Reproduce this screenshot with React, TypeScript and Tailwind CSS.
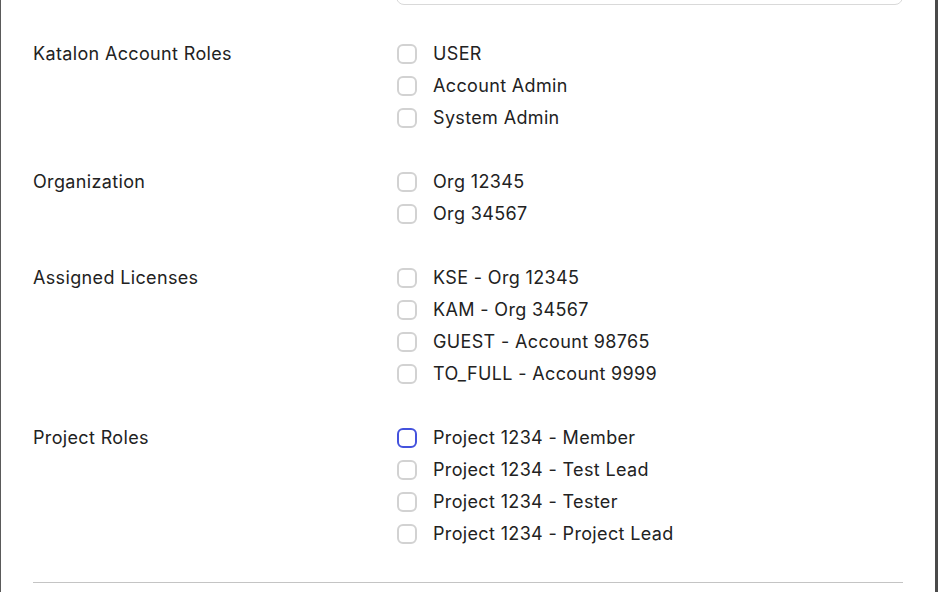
import React from 'react';

interface Group {
  label: string;
  options: string[];
}

const groups: Group[] = [
  { label: 'Katalon Account Roles', options: ['USER', 'Account Admin', 'System Admin'] },
  { label: 'Organization', options: ['Org 12345', 'Org 34567'] },
  {
    label: 'Assigned Licenses',
    options: ['KSE - Org 12345', 'KAM - Org 34567', 'GUEST - Account 98765', 'TO_FULL - Account 9999'],
  },
  {
    label: 'Project Roles',
    options: [
      'Project 1234 - Member',
      'Project 1234 - Test Lead',
      'Project 1234 - Tester',
      'Project 1234 - Project Lead',
    ],
  },
];

const Checkbox: React.FC<{ focused?: boolean }> = ({ focused }) => (
  <span
    className={
      focused
        ? 'ml-[1px] h-[20px] w-[20px] shrink-0 rounded-[6px] border-2 border-[#4452dd] bg-white'
        : 'ml-[1px] h-[20px] w-[20px] shrink-0 rounded-[6px] border-2 border-[#d2d2d2] bg-white'
    }
  />
);

export default function App() {
  return (
    <div
      className="h-[592px] w-[938px] overflow-hidden border-l border-[#5a5a5a] bg-white text-[18px] tracking-[0.35px] text-[#222222]"
      style={{ fontFamily: 'Inter, "Noto Sans", sans-serif' }}
    >
      <div className="flex h-full">
        <div className="flex-1 pl-[32px] pr-[32px]">
          {/* tail of the field above */}
          <div className="ml-[363px] -mt-[35px] h-[40px] rounded-lg border border-[#d9d9d9]" />

          <div className="pt-[33px]">
            {groups.map((g, gi) => (
              <div key={g.label} className="mb-[32px] grid grid-cols-[363px_1fr]">
                <div className="leading-[32px]">{g.label}</div>
                <div className="flex flex-col">
                  {g.options.map((o, oi) => (
                    <label key={o} className="flex h-[32px] items-center gap-[16px]">
                      <Checkbox focused={gi === 3 && oi === 0} />
                      <span className="leading-[32px]">{o}</span>
                    </label>
                  ))}
                </div>
              </div>
            ))}
          </div>

          <div className="border-t border-[#c4c4c4]" />
        </div>
        <div className="w-[3px] shrink-0 bg-[#4a4a4a]" />
      </div>
    </div>
  );
}
